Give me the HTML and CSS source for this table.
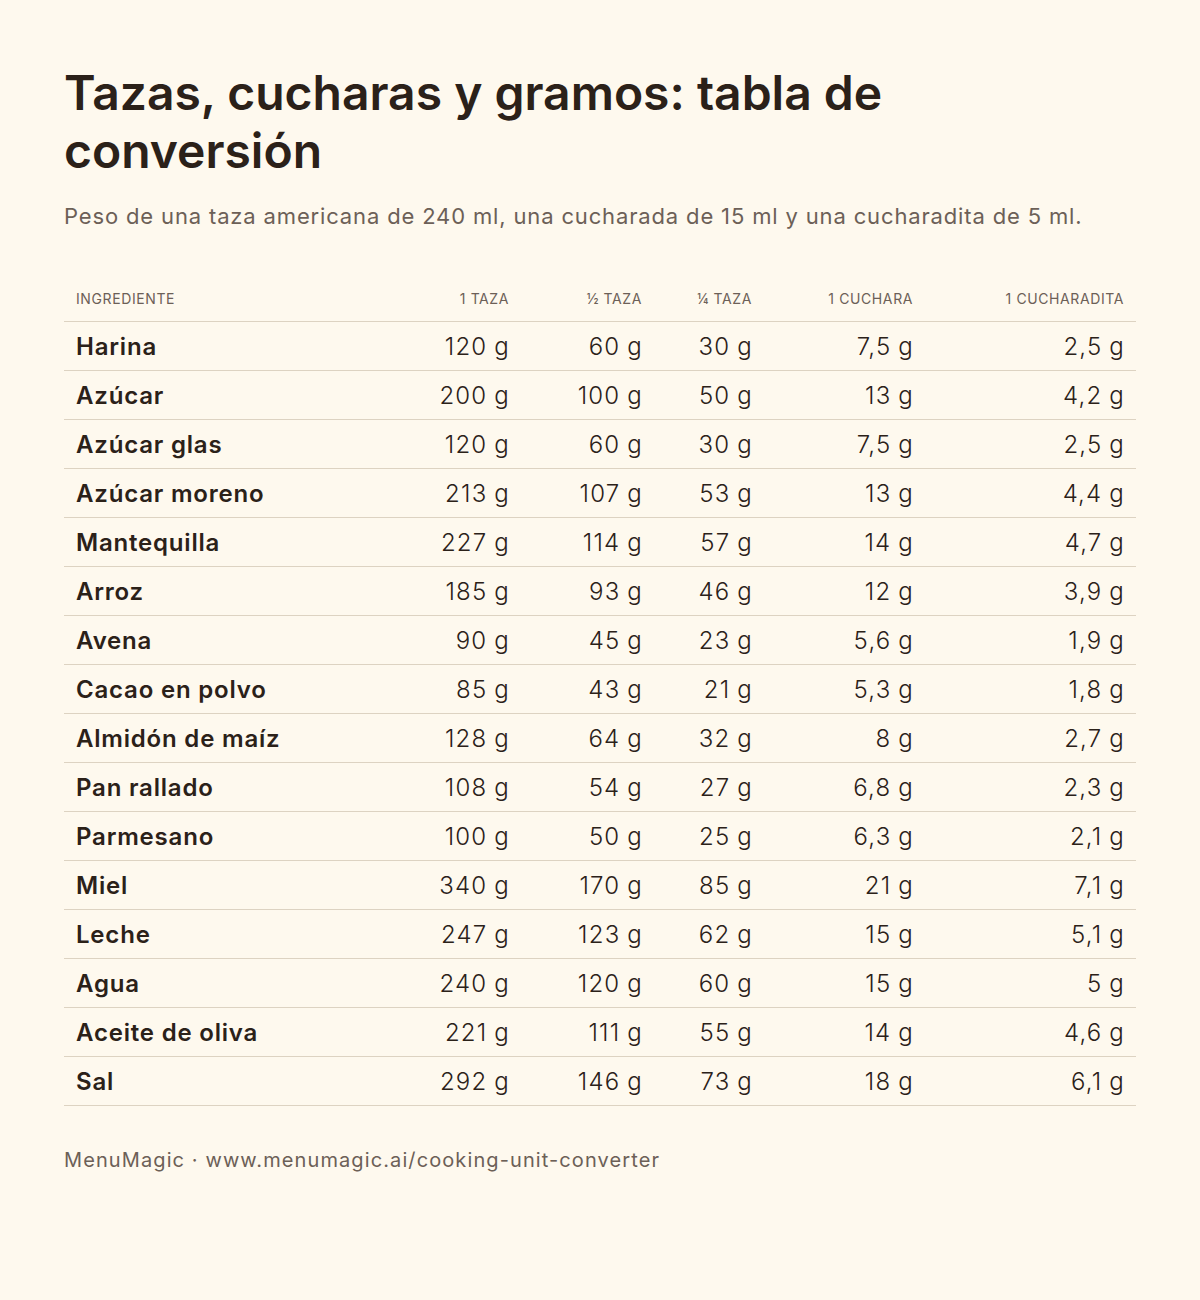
FILE: index.html
```html
<!DOCTYPE html>
<html lang="es">
<head>
<meta charset="utf-8">
<title>Tazas, cucharas y gramos</title>
<link rel="stylesheet" href="styles.css">
</head>
<body>
<main class="page">
  <h1 class="title">Tazas, cucharas y gramos: tabla de conversión</h1>
  <p class="subtitle">Peso de una taza americana de 240 ml, una cucharada de 15 ml y una cucharadita de 5 ml.</p>
  <table class="conv">
    <colgroup>
      <col class="c-ing"><col class="c-1"><col class="c-2"><col class="c-3"><col class="c-4"><col class="c-5">
    </colgroup>
    <thead>
      <tr><th class="left">Ingrediente</th><th>1 taza</th><th>½ taza</th><th>¼ taza</th><th>1 cuchara</th><th>1 cucharadita</th></tr>
    </thead>
    <tbody>
      <tr><td class="name">Harina</td><td>120 g</td><td>60 g</td><td>30 g</td><td>7,5 g</td><td>2,5 g</td></tr>
      <tr><td class="name">Azúcar</td><td>200 g</td><td>100 g</td><td>50 g</td><td>13 g</td><td>4,2 g</td></tr>
      <tr><td class="name">Azúcar glas</td><td>120 g</td><td>60 g</td><td>30 g</td><td>7,5 g</td><td>2,5 g</td></tr>
      <tr><td class="name">Azúcar moreno</td><td>213 g</td><td>107 g</td><td>53 g</td><td>13 g</td><td>4,4 g</td></tr>
      <tr><td class="name">Mantequilla</td><td>227 g</td><td>114 g</td><td>57 g</td><td>14 g</td><td>4,7 g</td></tr>
      <tr><td class="name">Arroz</td><td>185 g</td><td>93 g</td><td>46 g</td><td>12 g</td><td>3,9 g</td></tr>
      <tr><td class="name">Avena</td><td>90 g</td><td>45 g</td><td>23 g</td><td>5,6 g</td><td>1,9 g</td></tr>
      <tr><td class="name">Cacao en polvo</td><td>85 g</td><td>43 g</td><td>21 g</td><td>5,3 g</td><td>1,8 g</td></tr>
      <tr><td class="name">Almidón de maíz</td><td>128 g</td><td>64 g</td><td>32 g</td><td>8 g</td><td>2,7 g</td></tr>
      <tr><td class="name">Pan rallado</td><td>108 g</td><td>54 g</td><td>27 g</td><td>6,8 g</td><td>2,3 g</td></tr>
      <tr><td class="name">Parmesano</td><td>100 g</td><td>50 g</td><td>25 g</td><td>6,3 g</td><td>2,1 g</td></tr>
      <tr><td class="name">Miel</td><td>340 g</td><td>170 g</td><td>85 g</td><td>21 g</td><td>7,1 g</td></tr>
      <tr><td class="name">Leche</td><td>247 g</td><td>123 g</td><td>62 g</td><td>15 g</td><td>5,1 g</td></tr>
      <tr><td class="name">Agua</td><td>240 g</td><td>120 g</td><td>60 g</td><td>15 g</td><td>5 g</td></tr>
      <tr><td class="name">Aceite de oliva</td><td>221 g</td><td>111 g</td><td>55 g</td><td>14 g</td><td>4,6 g</td></tr>
      <tr><td class="name">Sal</td><td>292 g</td><td>146 g</td><td>73 g</td><td>18 g</td><td>6,1 g</td></tr>
    </tbody>
  </table>
  <p class="footer">MenuMagic · www.menumagic.ai/cooking-unit-converter</p>
</main>
</body>
</html>
```
FILE: styles.css
```css
html, body {
  margin: 0;
  padding: 0;
  background: #fef9ee;
}
body {
  font-family: "Inter", "Liberation Sans", sans-serif;
  color: #2b2119;
}
.page {
  padding: 64px 64px 0 64px;
  width: 1072px;
}
.title {
  margin: 0;
  font-size: 48px;
  line-height: 58px;
  font-weight: 600;
  letter-spacing: 0;
  color: #2b2119;
  width: 860px;
}
.subtitle {
  margin: 21px 0 0 0;
  font-size: 22px;
  line-height: 30px;
  color: #6c6057;
  font-weight: 400;
  letter-spacing: 0.85px;
}
.conv {
  margin-top: 44px;
  width: 1072px;
  border-collapse: collapse;
  table-layout: fixed;
}
.c-ing { width: 330px; }
.c-1 { width: 127px; }
.c-2 { width: 133px; }
.c-3 { width: 110px; }
.c-4 { width: 161px; }
.c-5 { width: 211px; }
.conv th {
  font-size: 14px;
  font-weight: 400;
  text-transform: uppercase;
  letter-spacing: 0.6px;
  color: #6c6057;
  text-align: right;
  padding: 0 12px;
  height: 46px;
  vertical-align: middle;
  border-bottom: 1px solid #ddd3c2;
}
.conv th.left { text-align: left; }
.conv td {
  font-size: 24px;
  font-weight: 300;
  letter-spacing: 1.2px;
  word-spacing: -1px;
  text-align: right;
  padding: 0 11px 0 12px;
  height: 48px;
  border-bottom: 1px solid #ddd3c2;
  color: #2b2119;
  white-space: nowrap;
}
.conv td.name {
  text-align: left;
  font-weight: 600;
  letter-spacing: 0.8px;
  word-spacing: 0;
}
.footer {
  margin: 40px 0 0 0;
  font-size: 20px;
  line-height: 28px;
  color: #6c6057;
  letter-spacing: 1.1px;
}
```
